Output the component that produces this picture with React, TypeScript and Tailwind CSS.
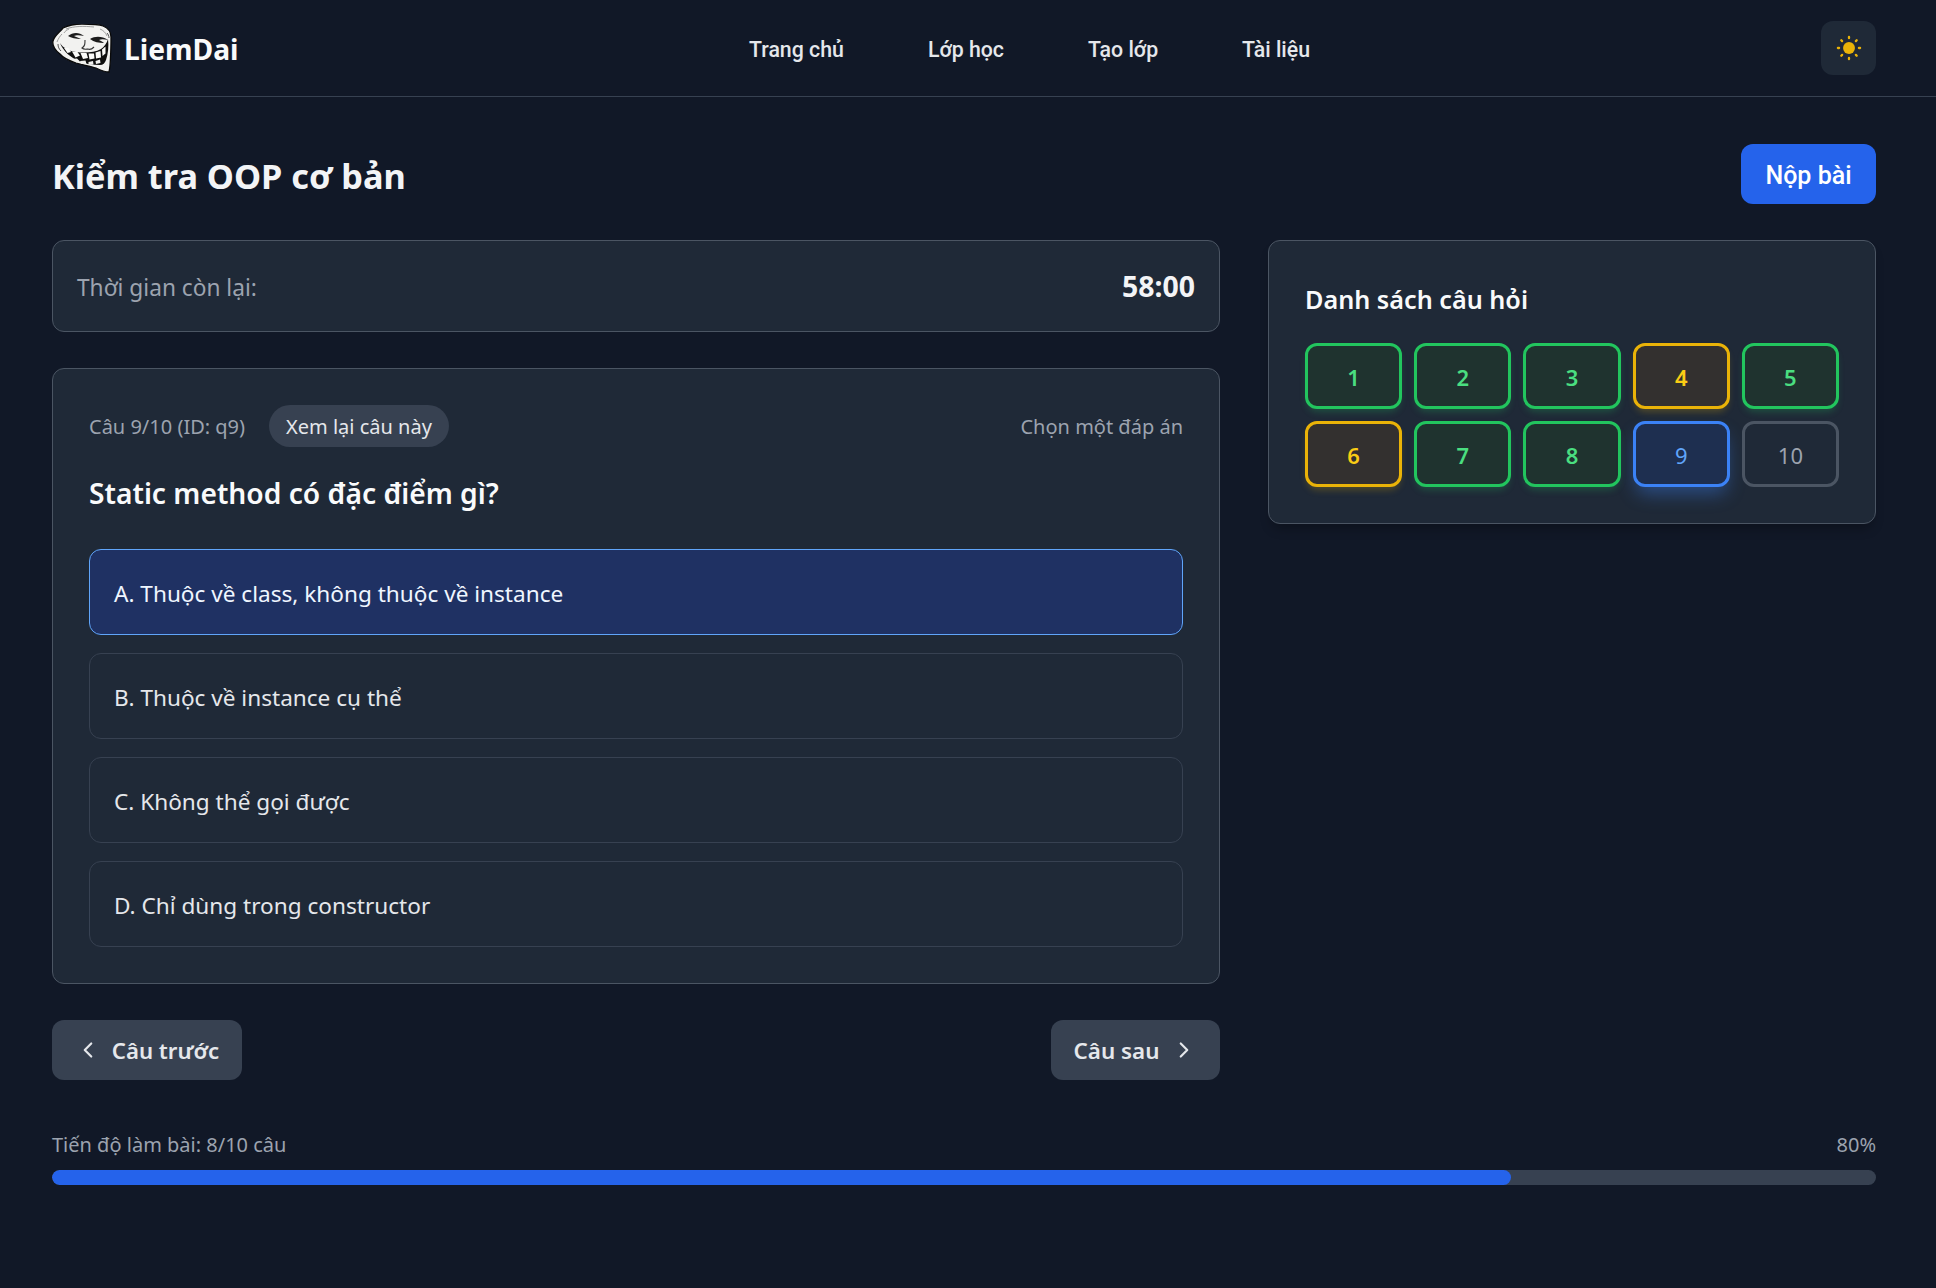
import { ChevronLeft, ChevronRight } from "lucide-react";

const font = { noto: "font-['Noto_Sans',sans-serif]" };

function Troll() {
  return (
    <svg viewBox="0 0 60 49" className="w-[60px] h-[49px]" aria-hidden="true">
      <path d="M11 4C17 1 23 0 30 0c8 0 16 0 21 2 5 2 8 6 8 11 0 6 0 12-.5 20-.2 6-.5 11-1.500 15-4 0-9-2-13-4-6-2-13-3-20-5-6-2-12-4-16-9C3 26 0 22 1 17c1-5 7-9 10-13z" fill="#f2f2f0" stroke="#0a0a0a" strokeWidth="1.300" />
      <path d="M14 5c8-3 18-3 28-2M48 5c3 1 6 4 7 7M12 9c1-2 3-3 5-4M5 18c1-3 3-6 5-8" stroke="#8a8a8a" strokeWidth=".8" fill="none" />
      <path d="M16 12c5-4 11-4 16 0-4-1-8-1-10 0 2 1 5 2 7 3-5 0-10-1-13-3z" fill="#1b1b1b" />
      <path d="M38 15c5-3 12-3 18 1-4-1-7-1-9 0 2 1 4 2 5 3-5 0-10-1-14-4z" fill="#1b1b1b" />
      <path d="M33 16c0 4 0 6-3 8 2 2 5 1 6 1 2 1 4 0 6-2" stroke="#333" strokeWidth="1.100" fill="none" />
      <path d="M8 19c3 5 9 8 16 9 8 1 18 1 25-3 3-2 6-6 7-10 1 7 0 15-2 21-1 3-3 5-6 5-7 0-15-1-21-4-8-3-16-10-19-18z" fill="#0e0e0e" />
      <path d="M12 24l3.500 5 3.500-1-2.500-4zM20 27.500l3.500 6 4.500-2-2.500-3.500zM28.500 29l2.500 6 5-1-1.500-5zM36.500 29.500l1 6 5-1-.5-5zM43.500 28.500l.5 6 5-1-.5-6.500zM50 25.500l.5 6.500 3-2.500v-7z" fill="#fafaf8" />
      <path d="M20 35l4.500 3 3-1-2.500-2.500zM28 37l1.500 3 5 0-1-3.500zM36.500 38l0 3 5-.5-.5-3.500zM43.500 37l.5 3 4.500-1-.5-3.500z" fill="#f0f0ee" />
      <path d="M6 20c0 3 1 5 3 7M55 9c1 1 2 3 2 5" stroke="#555" strokeWidth="1" fill="none" />
    </svg>
  );
}

function Sun() {
  return (
    <svg viewBox="0 0 24 24" className="w-[28px] h-[28px]" fill="#eab308" aria-hidden="true">
      <circle cx="12" cy="12" r="5.100" />
      <g stroke="#eab308" strokeWidth="2" strokeLinecap="round">
        <path d="M12 2.500v1M12 20.500v1M2.500 12h1M20.500 12h1M5.400 5.400l.7.7M17.900 17.900l.7.7M5.400 18.600l.7-.7M17.900 6.100l.7-.7" />
      </g>
    </svg>
  );
}

const chips: [string, string][] = [
  ["1", "g"], ["2", "g"], ["3", "g"], ["4", "y"], ["5", "g"],
  ["6", "y"], ["7", "g"], ["8", "g"], ["9", "b"], ["10", "n"],
];

function Chip({ label, kind }: { label: string; kind: string }) {
  const base = "h-[66px] rounded-[12px] border-[3px] flex items-center justify-center pt-[2px] text-[22px] ";
  if (kind === "g") return <button className={base + "font-semibold border-[#22c55e] bg-[#1f332f] text-[#4ade80] shadow-[0_5px_7px_-2px_rgba(34,197,94,0.25)]"}>{label}</button>;
  if (kind === "y") return <button className={base + "font-semibold border-[#eab308] bg-[#33302f] text-[#facc15] shadow-[0_5px_7px_-2px_rgba(234,179,8,0.25)]"}>{label}</button>;
  if (kind === "b") return <button className={base + "border-[#3b82f6] bg-[#1e2f50] text-[#60a5fa] shadow-[0_10px_18px_-3px_rgba(59,130,246,0.4)]"}>{label}</button>;
  return <button className={base + "border-[#4b5563] bg-[#1f2937] text-[#9ca3af]"}>{label}</button>;
}

const options = [
  "A. Thuộc về class, không thuộc về instance",
  "B. Thuộc về instance cụ thể",
  "C. Không thể gọi được",
  "D. Chỉ dùng trong constructor",
];

export default function App() {
  return (
    <div className={"min-h-[1288px] bg-[#111827] text-white " + font.noto}>
      <header className="h-[97px] border-b border-[#374151] pl-[52px] pr-[60px] flex items-center justify-between relative">
        <div className="flex items-center gap-[12px]">
          <Troll />
          <span className="text-[28.2px] font-bold text-[#f9fafb] pt-[2px]">LiemDai</span>
        </div>
        <nav className="absolute left-[749px] top-0 h-[96px] pt-[3px] flex items-center gap-[84px] text-[21.3px] font-medium text-[#e5e7eb] font-['Roboto',sans-serif]">
          <a>Trang chủ</a>
          <a>Lớp học</a>
          <a>Tạo lớp</a>
          <a>Tài liệu</a>
        </nav>
        <button className="w-[55px] h-[54px] rounded-[12px] bg-[#1f2937] flex items-center justify-center">
          <Sun />
        </button>
      </header>

      <main className="pl-[52px] pr-[60px] pt-[47px]">
        <div className="flex items-center justify-between h-[60px]">
          <h1 className="text-[34.3px] font-bold text-[#f3f4f6] pt-[3px]">Kiểm tra OOP cơ bản</h1>
          <button className="w-[135px] h-[60px] rounded-[12px] bg-[#2563eb] text-[25px] font-medium font-['Roboto',sans-serif] pt-[3px]">Nộp bài</button>
        </div>

        <div className="flex gap-[48px] mt-[36px] items-start">
          <div className="w-[1168px]">
            <div className="h-[92px] rounded-[12px] border border-[#4b5563] bg-[#1f2937] px-[24px] flex items-center justify-between">
              <span className="text-[22.7px] text-[#9ca3af] pt-[4px]">Thời gian còn lại:</span>
              <span className="text-[28.4px] font-bold text-[#f3f4f6] pt-[1px]">58:00</span>
            </div>

            <div className="mt-[36px] rounded-[12px] border border-[#4b5563] bg-[#1f2937] p-[36px]">
              <div className="flex items-center justify-between h-[41px]">
                <div className="flex items-center gap-[24px]">
                  <span className="text-[20px] text-[#9ca3af] pt-[3px]">Câu 9/10 (ID: q9)</span>
                  <span className="h-[42px] px-[17px] pt-[3px] rounded-full bg-[#374151] text-[#e5e7eb] text-[20px] flex items-center">Xem lại câu này</span>
                </div>
                <span className="text-[20px] text-[#9ca3af] pt-[3px]">Chọn một đáp án</span>
              </div>
              <h2 className="text-[28.2px] font-semibold mt-[26px] h-[42px] leading-[42px] text-[#f9fafb]">Static method có đặc điểm gì?</h2>
              <div className="mt-[35px] flex flex-col gap-[18px]">
                {options.map((o, i) => (
                  <div
                    key={o}
                    className={
                      "h-[86px] rounded-[12px] border px-[24px] pt-[3px] flex items-center text-[22.6px] " +
                      (i === 0 ? "border-[#60a5fa] bg-[#1f3163] text-[#eff6ff]" : "border-[#374151] bg-[#1f2937] text-[#e5e7eb]")
                    }
                  >
                    {o}
                  </div>
                ))}
              </div>
            </div>

            <div className="mt-[36px] flex justify-between">
              <button className="h-[60px] w-[190px] rounded-[12px] bg-[#374151] text-[#e5e7eb] text-[22.2px] font-semibold flex items-center justify-center gap-[11px]">
                <ChevronLeft size={26} strokeWidth={2} />
                <span className="pt-[2px]">Câu trước</span>
              </button>
              <button className="h-[60px] w-[169px] rounded-[12px] bg-[#374151] text-[#e5e7eb] text-[22.4px] font-semibold flex items-center justify-center gap-[12px]">
                <span className="pt-[2px]">Câu sau</span>
                <ChevronRight size={26} strokeWidth={2} />
              </button>
            </div>
          </div>

          <aside className="w-[608px] rounded-[12px] border border-[#4b5563] bg-[#1f2937] p-[36px] shadow-[0_8px_12px_-4px_rgba(0,0,0,0.3)]">
            <h3 className="text-[25.2px] font-semibold h-[42px] leading-[44px] text-[#f9fafb]">Danh sách câu hỏi</h3>
            <div className="mt-[24px] grid grid-cols-5 gap-x-[12px] gap-y-[12px]">
              {chips.map(([l, k]) => (
                <Chip key={l} label={l} kind={k} />
              ))}
            </div>
          </aside>
        </div>

        <div className="mt-[50px]">
          <div className="flex justify-between text-[20px] text-[#9ca3af] h-[30px] items-center">
            <span>Tiến độ làm bài: 8/10 câu</span>
            <span>80%</span>
          </div>
          <div className="mt-[10px] h-[15px] rounded-full bg-[#374151] overflow-hidden">
            <div className="h-full w-4/5 rounded-full bg-[#2563eb]" />
          </div>
        </div>
      </main>
    </div>
  );
}
